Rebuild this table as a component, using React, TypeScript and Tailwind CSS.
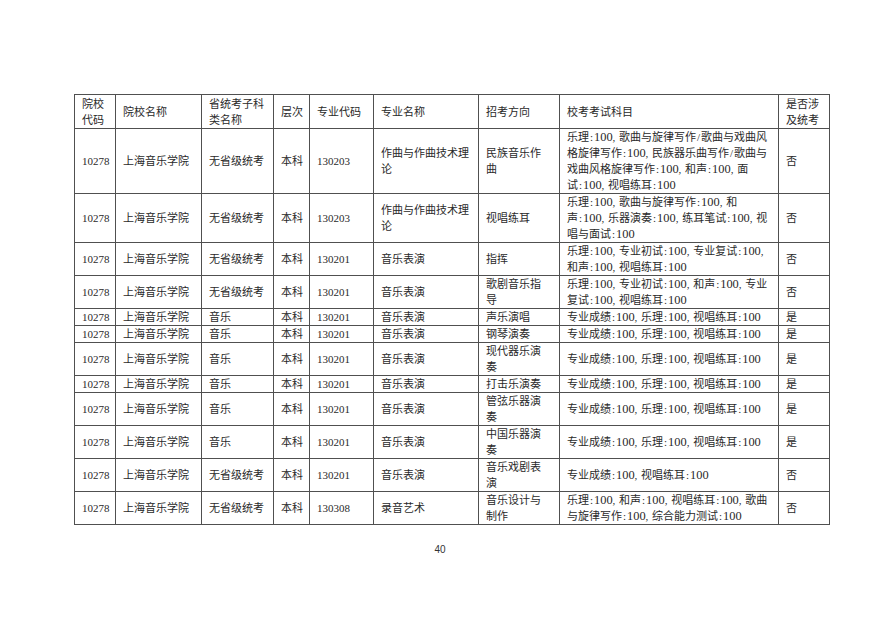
import React from "react";

type Row = {
  cat: string;
  code: string;
  major: string;
  dir: string[];
  subj: string[];
  yes: string;
};

const A = "专业成绩:100,乐理:100,视唱练耳:100";

const rows: Row[] = [
  {
    cat: "无省级统考",
    code: "130203",
    major: "作曲与作曲技术理|论",
    dir: ["民族音乐作", "曲"],
    subj: [
      "乐理:100,歌曲与旋律写作/歌曲与戏曲风",
      "格旋律写作:100,民族器乐曲写作/歌曲与",
      "戏曲风格旋律写作:100,和声:100,面",
      "试:100,视唱练耳:100",
    ],
    yes: "否",
  },
  {
    cat: "无省级统考",
    code: "130203",
    major: "作曲与作曲技术理|论",
    dir: ["视唱练耳"],
    subj: [
      "乐理:100,歌曲与旋律写作:100,和",
      "声:100,乐器演奏:100,练耳笔试:100,视",
      "唱与面试:100",
    ],
    yes: "否",
  },
  {
    cat: "无省级统考",
    code: "130201",
    major: "音乐表演",
    dir: ["指挥"],
    subj: ["乐理:100,专业初试:100,专业复试:100,", "和声:100,视唱练耳:100"],
    yes: "否",
  },
  {
    cat: "无省级统考",
    code: "130201",
    major: "音乐表演",
    dir: ["歌剧音乐指", "导"],
    subj: ["乐理:100,专业初试:100,和声:100,专业", "复试:100,视唱练耳:100"],
    yes: "否",
  },
  { cat: "音乐", code: "130201", major: "音乐表演", dir: ["声乐演唱"], subj: [A], yes: "是" },
  { cat: "音乐", code: "130201", major: "音乐表演", dir: ["钢琴演奏"], subj: [A], yes: "是" },
  { cat: "音乐", code: "130201", major: "音乐表演", dir: ["现代器乐演", "奏"], subj: [A], yes: "是" },
  { cat: "音乐", code: "130201", major: "音乐表演", dir: ["打击乐演奏"], subj: [A], yes: "是" },
  { cat: "音乐", code: "130201", major: "音乐表演", dir: ["管弦乐器演", "奏"], subj: [A], yes: "是" },
  { cat: "音乐", code: "130201", major: "音乐表演", dir: ["中国乐器演", "奏"], subj: [A], yes: "是" },
  {
    cat: "无省级统考",
    code: "130201",
    major: "音乐表演",
    dir: ["音乐戏剧表", "演"],
    subj: ["专业成绩:100,视唱练耳:100"],
    yes: "否",
  },
  {
    cat: "无省级统考",
    code: "130308",
    major: "录音艺术",
    dir: ["音乐设计与", "制作"],
    subj: ["乐理:100,和声:100,视唱练耳:100,歌曲", "与旋律写作:100,综合能力测试:100"],
    yes: "否",
  },
];

function Rich({ text }: { text: string }) {
  const parts = text.split(/([0-9]+|[:,\/])/).filter((p) => p !== "");
  return (
    <>
      {parts.map((p, i) => {
        if (/^[0-9]+$/.test(p))
          return (
            <span key={i} className="text-[12.4px] leading-[0]">
              {p}
            </span>
          );
        if (p === ":")
          return (
            <span key={i} className="inline-block w-[5px] text-center leading-[0]">
              :
            </span>
          );
        if (p === ",")
          return (
            <span key={i} className="inline-block w-[6.5px] text-left leading-[0]">
              ,
            </span>
          );
        if (p === "/")
          return (
            <span key={i} className="inline-block w-[5px] text-center leading-[0]">
              /
            </span>
          );
        return <React.Fragment key={i}>{p}</React.Fragment>;
      })}
    </>
  );
}

function Lines({ items, rich }: { items: string[]; rich?: boolean }) {
  return (
    <>
      {items.map((t, i) => (
        <React.Fragment key={i}>
          {i > 0 && <br />}
          {rich ? <Rich text={t} /> : t}
        </React.Fragment>
      ))}
    </>
  );
}

const td = "border border-[#505050] px-[7px] py-0 align-middle whitespace-nowrap text-left";
const th = td + " font-normal";

export default function App() {
  return (
    <div
      className="w-[880px] h-[622px] bg-white text-[#2a2a2a] text-[11px] leading-[16px] overflow-hidden"
      style={{ fontFamily: '"Liberation Serif", "Noto Sans CJK SC", serif' }}
    >
      <div className="pt-[94px] pl-[74px]">
        <table className="border-collapse table-fixed w-[755px]">
          <colgroup>
            <col className="w-[41px]" />
            <col className="w-[86px]" />
            <col className="w-[72px]" />
            <col className="w-[36px]" />
            <col className="w-[64px]" />
            <col className="w-[105px]" />
            <col className="w-[81px]" />
            <col className="w-[219px]" />
            <col className="w-[51px]" />
          </colgroup>
          <thead>
            <tr className="h-[34px]">
              <th className={th}>
                院校
                <br />
                代码
              </th>
              <th className={th}>院校名称</th>
              <th className={th}>
                省统考子科
                <br />
                类名称
              </th>
              <th className={th}>层次</th>
              <th className={th}>专业代码</th>
              <th className={th}>专业名称</th>
              <th className={th}>招考方向</th>
              <th className={th}>校考考试科目</th>
              <th className={th}>
                是否涉
                <br />
                及统考
              </th>
            </tr>
          </thead>
          <tbody>
            {rows.map((r, i) => (
              <tr key={i}>
                <td className={td}>10278</td>
                <td className={td}>上海音乐学院</td>
                <td className={td}>{r.cat}</td>
                <td className={td}>本科</td>
                <td className={td}>{r.code}</td>
                <td className={td}>
                  <Lines items={r.major.split("|")} />
                </td>
                <td className={td}>
                  <Lines items={r.dir} />
                </td>
                <td className={td}>
                  <Lines items={r.subj} rich />
                </td>
                <td className={td}>{r.yes}</td>
              </tr>
            ))}
          </tbody>
        </table>
      </div>
      <div
        className="mt-[19px] w-[880px] text-center text-[10px] leading-[12px] text-[#333]"
        style={{ fontFamily: '"Liberation Sans", sans-serif' }}
      >
        40
      </div>
    </div>
  );
}
